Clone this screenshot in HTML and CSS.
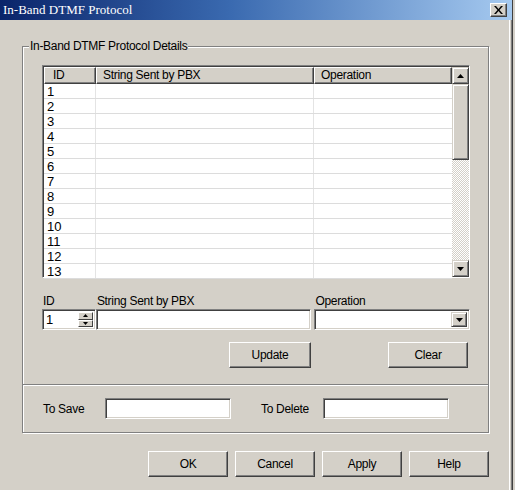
FILE: index.html
```html
<!DOCTYPE html>
<html>
<head>
<meta charset="utf-8">
<link rel="stylesheet" href="styles.css">
</head>
<body>
<div class="window">
  <div class="titlebar">
    <span class="title">In-Band DTMF Protocol</span>
    <span class="close"><svg width="9" height="8" viewBox="0 0 9 8"><path d="M0 0h2l2.5 3 2.5-3h2L5.5 4 9 8H7L4.5 5 2 8H0l3.5-4z" fill="#000"/></svg></span>
  </div>
  <div class="content">
    <div class="group group-top">
      <span class="legend">In-Band DTMF Protocol Details</span>
      <div class="table">
        <div class="grid">
          <div class="row head">
            <span class="c1">ID</span><span class="c2">String Sent by PBX</span><span class="c3">Operation</span>
          </div>
          <div class="row"><span class="c1">1</span><span class="c2"></span><span class="c3"></span></div>
          <div class="row"><span class="c1">2</span><span class="c2"></span><span class="c3"></span></div>
          <div class="row"><span class="c1">3</span><span class="c2"></span><span class="c3"></span></div>
          <div class="row"><span class="c1">4</span><span class="c2"></span><span class="c3"></span></div>
          <div class="row"><span class="c1">5</span><span class="c2"></span><span class="c3"></span></div>
          <div class="row"><span class="c1">6</span><span class="c2"></span><span class="c3"></span></div>
          <div class="row"><span class="c1">7</span><span class="c2"></span><span class="c3"></span></div>
          <div class="row"><span class="c1">8</span><span class="c2"></span><span class="c3"></span></div>
          <div class="row"><span class="c1">9</span><span class="c2"></span><span class="c3"></span></div>
          <div class="row"><span class="c1">10</span><span class="c2"></span><span class="c3"></span></div>
          <div class="row"><span class="c1">11</span><span class="c2"></span><span class="c3"></span></div>
          <div class="row"><span class="c1">12</span><span class="c2"></span><span class="c3"></span></div>
          <div class="row"><span class="c1">13</span><span class="c2"></span><span class="c3"></span></div>
        </div>
        <div class="scrollbar">
          <div class="sbtn"><svg width="7" height="4" viewBox="0 0 7 4"><path d="M3.5 0L7 4H0z" fill="#000"/></svg></div>
          <div class="thumb"></div>
          <div class="track"></div>
          <div class="sbtn"><svg width="7" height="4" viewBox="0 0 7 4"><path d="M0 0h7L3.5 4z" fill="#000"/></svg></div>
        </div>
      </div>

      <div class="editor">
        <div class="field f-id">
          <label>ID</label>
          <div class="sunken spin">
            <span class="val">1</span>
            <span class="spinbtns">
              <span class="sb"><svg width="5" height="3" viewBox="0 0 5 3"><path d="M2.5 0L5 3H0z" fill="#000"/></svg></span>
              <span class="sb"><svg width="5" height="3" viewBox="0 0 5 3"><path d="M0 0h5L2.5 3z" fill="#000"/></svg></span>
            </span>
          </div>
        </div>
        <div class="field f-str">
          <label>String Sent by PBX</label>
          <div class="sunken"></div>
        </div>
        <div class="field f-op">
          <label>Operation</label>
          <div class="sunken combo">
            <span class="dbtn"><svg width="7" height="4" viewBox="0 0 7 4"><path d="M0 0h7L3.5 4z" fill="#000"/></svg></span>
          </div>
        </div>
      </div>

      <div class="actions">
        <button class="btn btn-update">Update</button>
        <button class="btn btn-clear">Clear</button>
      </div>
    </div>

    <div class="group group-bottom">
      <label class="lbl-save">To Save</label>
      <div class="sunken in-save"></div>
      <label class="lbl-del">To Delete</label>
      <div class="sunken in-del"></div>
    </div>

    <div class="footer">
      <button class="btn">OK</button>
      <button class="btn">Cancel</button>
      <button class="btn">Apply</button>
      <button class="btn">Help</button>
    </div>
  </div>
</div>
</body>
</html>
```

FILE: styles.css
```css
* { box-sizing: border-box; }
html, body { margin: 0; padding: 0; }
body {
  background: #d4d0c8;
  width: 515px;
  height: 490px;
  overflow: hidden;
  font-family: "Liberation Sans", Arial, sans-serif;
  font-size: 12px;
  color: #000;
}
.window {
  width: 513px;
  height: 490px;
  background: #d4d0c8;
  border-right: 1px solid #404040;
  box-shadow: inset -1px 0 0 #808080, inset -2px 0 0 #d4d0c8, inset -3px 0 0 #fff;
}
.titlebar {
  height: 20px;
  background: linear-gradient(to right, #0a246a 0%, #3a6ab0 45%, #a6caf0 100%);
  display: flex;
  align-items: center;
  justify-content: space-between;
  padding: 0 5px 0 3px;
}
.title {
  font-family: "Liberation Serif", "Times New Roman", serif;
  font-size: 13px;
  color: #fff;
}
.close {
  width: 17px;
  height: 14px;
  background: #d4d0c8;
  border: 1px solid;
  border-color: #fff #404040 #404040 #fff;
  box-shadow: inset -1px -1px 0 #808080;
  display: flex;
  align-items: center;
  justify-content: center;
}
.content {
  padding: 26px 0 0 22px;
}
.group {
  width: 467px;
  border: 1px solid #808080;
  box-shadow: inset 1px 1px 0 #fff, 1px 1px 0 #fff;
}
.group-top {
  height: 339px;
  padding: 19px 18px 0 19px;
}
.legend {
  display: block;
  width: max-content;
  margin: -27px 0 12px -13px;
  padding: 0 1px;
  background: #d4d0c8;
  line-height: 14px;
  letter-spacing: -0.3px;
}
.table {
  display: flex;
  width: 428px;
  height: 213px;
  border: 1px solid;
  border-color: #808080 #fff #fff #808080;
  box-shadow: inset 1px 1px 0 #404040;
  padding: 1px 0 0 1px;
  background: #fff;
}
.grid { flex: 1; }
.row {
  display: flex;
  height: 15px;
  border-bottom: 1px solid #dcdcdc;
  line-height: 15px;
  font-size: 13px;
}
.row span { overflow: hidden; white-space: nowrap; }
.c1 { width: 52px; padding-left: 3px; border-right: 1px solid #e4e4e4; }
.c2 { width: 218px; border-right: 1px solid #e4e4e4; }
.c3 { flex: 1; }
.row.head {
  height: 17px;
  border-bottom: 0;
  line-height: 17px;
  font-size: 12px;
  letter-spacing: -0.3px;
}
.row.head span {
  background: #d4d0c8;
  border-top: 1px solid #fff;
  border-left: 1px solid #fff;
  border-right: 1px solid #404040;
  border-bottom: 1px solid #404040;
  box-shadow: inset -1px -1px 0 #808080;
  line-height: 15px;
  padding-left: 6px;
}
.row.head .c1 { padding-left: 8px; }
.scrollbar {
  width: 17px;
  display: flex;
  flex-direction: column;
  background-color: #ece9e2;
  background-image: repeating-conic-gradient(#fff 0 25%, #d4d0c8 0 50%);
  background-size: 2px 2px;
}
.sbtn, .thumb {
  background: #d4d0c8;
  border: 1px solid;
  border-color: #d4d0c8 #404040 #404040 #d4d0c8;
  box-shadow: inset 1px 1px 0 #fff, inset -1px -1px 0 #808080;
}
.sbtn {
  height: 17px;
  display: flex;
  align-items: center;
  justify-content: center;
}
.thumb { height: 76px; }
.track { flex: 1; }

.editor {
  display: flex;
  margin-top: 16px;
}
.field { display: flex; flex-direction: column; }
.field label {
  height: 15px;
  line-height: 14px;
  letter-spacing: -0.3px;
  margin-left: 1px;
}
.sunken {
  height: 21px;
  background: #fff;
  border: 1px solid;
  border-color: #808080 #fff #fff #808080;
  box-shadow: inset 1px 1px 0 #404040, inset -1px -1px 0 #d4d0c8;
}
.f-id { width: 54px; }
.f-str { width: 216px; margin-left: 0; }
.f-op { width: 156px; margin-left: 3px; }
.spin { display: flex; justify-content: space-between; padding: 2px 2px 2px 3px; }
.spin .val { font-size: 13px; line-height: 16px; }
.spinbtns { display: flex; flex-direction: column; width: 15px; }
.sb {
  flex: 1;
  background: #d4d0c8;
  border: 1px solid;
  border-color: #fff #404040 #404040 #fff;
  display: flex;
  align-items: center;
  justify-content: center;
}
.combo { display: flex; justify-content: flex-end; padding: 2px; }
.dbtn {
  width: 16px;
  background: #d4d0c8;
  border: 1px solid;
  border-color: #d4d0c8 #404040 #404040 #d4d0c8;
  box-shadow: inset 1px 1px 0 #fff, inset -1px -1px 0 #808080;
  display: flex;
  align-items: center;
  justify-content: center;
}
.btn {
  font-family: "Liberation Sans", Arial, sans-serif;
  font-size: 12px;
  letter-spacing: -0.3px;
  color: #000;
  height: 26px;
  padding: 0;
  background: #d4d0c8;
  border: 1px solid;
  border-color: #fff #404040 #404040 #fff;
  box-shadow: inset -1px -1px 0 #808080;
  width: 80px;
}
.actions {
  display: flex;
  margin-top: 12px;
  padding-left: 187px;
  gap: 77px;
}
.actions .btn { width: 82px; }
.actions .btn-clear { width: 80px; }
.group-bottom {
  height: 48px;
  border-top: 0;
  display: flex;
  align-items: center;
  padding-left: 20px;
}
.group-bottom label { letter-spacing: -0.3px; }
.lbl-save { width: 62px; }
.in-save { width: 126px; }
.lbl-del { margin-left: 30px; width: 62px; }
.in-del { width: 126px; }
.footer {
  display: flex;
  gap: 7px;
  margin-top: 18px;
  padding-left: 126px;
}
.footer .btn { width: 80px; }
```
